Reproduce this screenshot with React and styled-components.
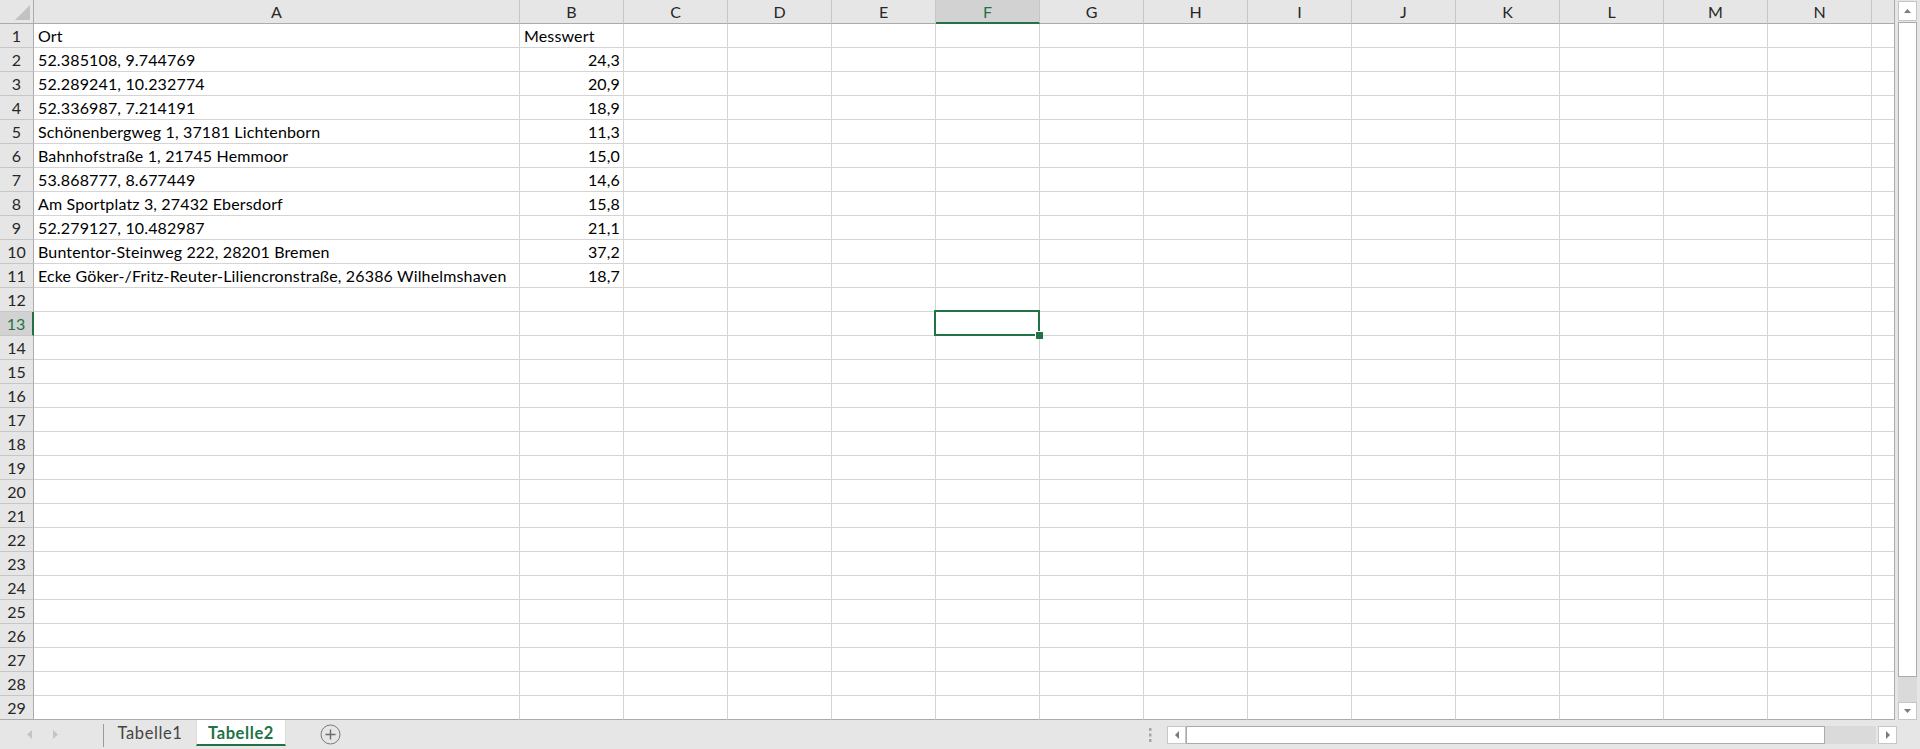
import React from 'react';
import styled, { createGlobalStyle, css } from 'styled-components';

const GREEN = '#217346';
const GRID = '#d4d4d4';
const HEAD_BG = '#e6e6e6';
const HEAD_ACTIVE = '#d2d2d2';
const HEAD_LINE = '#c6c6c6';
const EDGE = '#ababab';

const GlobalStyle = createGlobalStyle`
  html, body {
    margin: 0;
    padding: 0;
    background: ${HEAD_BG};
    overflow: hidden;
  }
  body {
    font-family: Lato, "Open Sans", "Liberation Sans", sans-serif;
    font-size: 16px;
  }
  * { box-sizing: border-box; }
`;

const COLUMNS = 'ABCDEFGHIJKLMN'.split('');
const ROW_COUNT = 29;
const ACTIVE = { col: 'F', row: 13 };

// Column A holds the place, column B the measured value
const ROWS = {
  1: ['Ort', { text: 'Messwert', num: false }],
  2: ['52.385108, 9.744769', '24,3'],
  3: ['52.289241, 10.232774', '20,9'],
  4: ['52.336987, 7.214191', '18,9'],
  5: ['Schönenbergweg 1, 37181 Lichtenborn', '11,3'],
  6: ['Bahnhofstraße 1, 21745 Hemmoor', '15,0'],
  7: ['53.868777, 8.677449', '14,6'],
  8: ['Am Sportplatz 3, 27432 Ebersdorf', '15,8'],
  9: ['52.279127, 10.482987', '21,1'],
  10: ['Buntentor-Steinweg 222, 28201 Bremen', '37,2'],
  11: ['Ecke Göker-/Fritz-Reuter-Liliencronstraße, 26386 Wilhelmshaven', '18,7'],
};

const Window = styled.div`
  display: flex;
  flex-direction: column;
  width: 1920px;
  height: 749px;
  background: ${HEAD_BG};
`;

const Main = styled.div`
  display: flex;
  height: 720px;
`;

const Sheet = styled.div`
  flex: 1;
  display: grid;
  grid-template-columns: 34px 486px repeat(13, 104px) 1fr;
  grid-auto-rows: 24px;
  background: #fff;
  border-right: 1px solid ${EDGE};
  overflow: hidden;
`;

const Corner = styled.div`
  display: flex;
  align-items: flex-end;
  justify-content: flex-end;
  padding: 0 3px 3px 0;
  background: ${HEAD_BG};
  border-right: 1px solid ${EDGE};
  border-bottom: 1px solid ${EDGE};
`;

const ColHeader = styled.div`
  background: ${(p) => (p.$active ? HEAD_ACTIVE : HEAD_BG)};
  border-right: ${(p) => (p.$filler ? 'none' : `1px solid ${HEAD_LINE}`)};
  border-bottom: ${(p) => (p.$active ? `2px solid ${GREEN}` : `1px solid ${EDGE}`)};
  color: ${(p) => (p.$active ? GREEN : '#262626')};
  text-align: center;
  line-height: 23px;
  white-space: nowrap;
`;

const RowHeader = styled.div`
  background: ${(p) => (p.$active ? HEAD_ACTIVE : HEAD_BG)};
  border-right: ${(p) => (p.$active ? `2px solid ${GREEN}` : `1px solid ${EDGE}`)};
  border-bottom: 1px solid ${(p) => (p.$last ? EDGE : HEAD_LINE)};
  color: ${(p) => (p.$active ? GREEN : '#262626')};
  text-align: center;
  line-height: 23px;
`;

const Cell = styled.div`
  position: relative;
  border-right: ${(p) => (p.$filler ? 'none' : `1px solid ${GRID}`)};
  border-bottom: 1px solid ${(p) => (p.$last ? EDGE : GRID)};
  padding: 0 3px 0 4px;
  line-height: 23px;
  letter-spacing: 0.15px;
  color: #000;
  white-space: nowrap;
  text-align: ${(p) => (p.$num ? 'right' : 'left')};

  ${(p) =>
    p.$selected &&
    css`
      &::before {
        content: '';
        position: absolute;
        top: -2px;
        left: -2px;
        right: -1px;
        bottom: -1px;
        border: 2px solid ${GREEN};
        z-index: 2;
      }
      &::after {
        content: '';
        position: absolute;
        right: -4px;
        bottom: -4px;
        width: 7px;
        height: 7px;
        background: ${GREEN};
        border-top: 1px solid #fff;
        border-left: 1px solid #fff;
        z-index: 3;
      }
    `}
`;

const VScroll = styled.div`
  width: 25px;
  display: flex;
  flex-direction: column;
  padding: 1px 3px 0 3px;
  background: ${HEAD_BG};
`;

const ScrollButton = styled.div`
  display: flex;
  align-items: center;
  justify-content: center;
  flex: ${(p) => (p.$grow ? 1 : 'none')};
  width: ${(p) => p.$w || 'auto'};
  height: ${(p) => p.$h || 'auto'};
  margin-left: ${(p) => p.$gap || '0'};
  background: #fff;
  border: 1px solid ${HEAD_LINE};
`;

const Thumb = styled.div`
  flex: none;
  width: ${(p) => p.$w || 'auto'};
  height: ${(p) => p.$h || 'auto'};
  margin: ${(p) => p.$m || '0'};
  background: #fff;
  border: 1px solid ${EDGE};
`;

const Track = styled.div`
  flex: none;
  width: ${(p) => p.$w || 'auto'};
  height: ${(p) => p.$h || 'auto'};
  background: #dadada;
`;

const TabBar = styled.div`
  display: flex;
  align-items: stretch;
  height: 29px;
  background: ${HEAD_BG};
`;

const NavArrows = styled.div`
  width: 103px;
  display: flex;
  align-items: center;
  gap: 21px;
  padding-left: 27px;
  padding-bottom: 1px;
`;

const Divider = styled.div`
  width: 1px;
  margin: 4px 0 2px;
  background: #9b9b9b;
`;

const Tab = styled.div`
  display: flex;
  align-items: flex-start;
  justify-content: center;
  width: ${(p) => p.$w}px;
  padding-top: 3px;
  font-size: 16.5px;
  letter-spacing: 0.6px;
  color: #444;
  white-space: nowrap;

  ${(p) =>
    p.$active &&
    css`
      height: 26px;
      background: #fff;
      color: ${GREEN};
      font-weight: 700;
      border-left: 1px solid #dcdcdc;
      border-right: 1px solid #dcdcdc;
      border-bottom: 2px solid ${GREEN};
    `}
`;

const AddSheet = styled.div`
  display: flex;
  align-items: center;
  margin-left: 34px;
  padding-bottom: 1px;
`;

const Spacer = styled.div`
  flex: 1;
`;

const SplitHandle = styled.div`
  display: flex;
  align-items: center;
  margin-right: 15px;
`;

const HScroll = styled.div`
  display: flex;
  align-items: stretch;
  height: 18px;
  margin: 6px 23px 0 0;
`;

const Triangle = ({ dir, color = '#7b7b7b', w = 7, h = 4 }) => {
  const shapes = {
    up: `0,${h} ${w / 2},0 ${w},${h}`,
    down: `0,0 ${w},0 ${w / 2},${h}`,
    left: `${w},0 0,${h / 2} ${w},${h}`,
    right: `0,0 ${w},${h / 2} 0,${h}`,
  };
  return (
    <svg width={w} height={h} viewBox={`0 0 ${w} ${h}`}>
      <polygon points={shapes[dir]} fill={color} />
    </svg>
  );
};

const CornerMark = () => (
  <svg width="15" height="15" viewBox="0 0 15 15">
    <polygon points="0,15 15,0 15,15" fill="#c2c2c2" />
  </svg>
);

const PlusCircle = () => (
  <svg width="21" height="21" viewBox="0 0 21 21">
    <circle cx="10.5" cy="10.5" r="9.5" fill="none" stroke="#7a7a7a" strokeWidth="1" />
    <path d="M10.5 5.5v10M5.5 10.5h10" stroke="#6a6a6a" strokeWidth="1.4" />
  </svg>
);

const Dots = () => (
  <svg width="3" height="14" viewBox="0 0 3 14">
    <rect x="0" y="0" width="2.5" height="3" fill="#a6a6a6" />
    <rect x="0" y="5.5" width="2.5" height="3" fill="#a6a6a6" />
    <rect x="0" y="11" width="2.5" height="3" fill="#a6a6a6" />
  </svg>
);

function cellContent(row, colIndex) {
  const entry = ROWS[row];
  if (!entry) return { text: '', num: false };
  const value = entry[colIndex];
  if (value === undefined) return { text: '', num: false };
  if (typeof value === 'object') return value;
  return { text: value, num: colIndex === 1 };
}

export default function App() {
  const rows = Array.from({ length: ROW_COUNT }, (_, i) => i + 1);

  return (
    <Window>
      <GlobalStyle />
      <Main>
        <Sheet>
          <Corner>
            <CornerMark />
          </Corner>
          {COLUMNS.map((c) => (
            <ColHeader key={c} $active={c === ACTIVE.col}>
              {c}
            </ColHeader>
          ))}
          <ColHeader $filler />

          {rows.map((r) => {
            const last = r === ROW_COUNT;
            return (
              <React.Fragment key={r}>
                <RowHeader $active={r === ACTIVE.row} $last={last}>
                  {r}
                </RowHeader>
                {COLUMNS.map((c, ci) => {
                  const { text, num } = cellContent(r, ci);
                  return (
                    <Cell
                      key={c}
                      $num={num}
                      $last={last}
                      $selected={c === ACTIVE.col && r === ACTIVE.row}
                    >
                      {text}
                    </Cell>
                  );
                })}
                <Cell $filler $last={last} />
              </React.Fragment>
            );
          })}
        </Sheet>

        <VScroll>
          <ScrollButton $h="20px">
            <Triangle dir="up" />
          </ScrollButton>
          <Thumb $h="655px" $m="1px 0 0" />
          <Track $h="25px" />
          <ScrollButton $grow>
            <Triangle dir="down" />
          </ScrollButton>
        </VScroll>
      </Main>

      <TabBar>
        <NavArrows>
          <Triangle dir="left" color="#c4c4c4" w={5} h={9} />
          <Triangle dir="right" color="#c4c4c4" w={5} h={9} />
        </NavArrows>
        <Divider />
        <Tab $w={92}>Tabelle1</Tab>
        <Tab $w={90} $active>
          Tabelle2
        </Tab>
        <AddSheet>
          <PlusCircle />
        </AddSheet>
        <Spacer />
        <SplitHandle>
          <Dots />
        </SplitHandle>
        <HScroll>
          <ScrollButton $w="19px">
            <Triangle dir="left" w={4} h={8} />
          </ScrollButton>
          <Thumb $w="639px" />
          <Track $w="51px" />
          <ScrollButton $w="19px" $gap="2px">
            <Triangle dir="right" w={4} h={8} />
          </ScrollButton>
        </HScroll>
      </TabBar>
    </Window>
  );
}
